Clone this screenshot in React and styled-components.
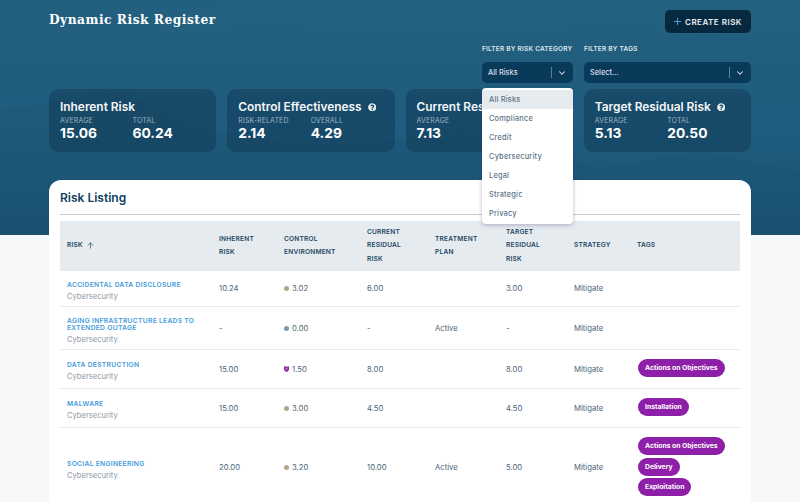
import React from "react";
import styled, { createGlobalStyle } from "styled-components";
import { ArrowUp, ChevronDown, Plus } from "lucide-react";
import { FaQuestionCircle } from "react-icons/fa";

const GlobalStyle = createGlobalStyle`
  html, body {
    margin: 0;
    height: 100%;
    overflow: hidden;
    background: #f5f7f8;
  }
  body {
    font-family: "Inter", "Open Sans", sans-serif;
  }
  * { box-sizing: border-box; }
`;

const Page = styled.div`
  position: relative;
  width: 800px;
  height: 502px;
  overflow: hidden;
`;

const Backdrop = styled.svg`
  position: absolute;
  top: 0;
  left: 0;
  width: 800px;
  height: 235px;
`;

const Content = styled.div`
  position: relative;
  padding: 10px 49px 0;
`;

const TopRow = styled.div`
  display: flex;
  justify-content: space-between;
  align-items: flex-start;
`;

const Title = styled.h1`
  margin: 0;
  font-family: "DejaVu Serif Condensed", "DejaVu Serif", "Liberation Serif", serif;
  font-stretch: condensed;
  font-size: 13.6px;
  line-height: 18px;
  font-weight: 700;
  letter-spacing: 0.5px;
  color: #fff;
`;

const CreateButton = styled.button`
  display: flex;
  align-items: center;
  justify-content: center;
  gap: 2px;
  width: 86px;
  height: 23px;
  padding: 0 2px 0 0;
  border: none;
  border-radius: 5px;
  background: #07293f;
  color: #e8eef2;
  font-family: inherit;
  font-size: 8px;
  font-weight: 600;
  letter-spacing: 0.5px;
`;

const Filters = styled.div`
  display: flex;
  justify-content: flex-end;
  gap: 11px;
  margin-top: 10px;
`;

const Filter = styled.div`
  position: relative;
  width: ${(p) => p.$width}px;
`;

const FilterLabel = styled.div`
  height: 19px;
  padding-top: 2px;
  font-size: 6.5px;
  line-height: 9px;
  font-weight: 600;
  letter-spacing: 0.22px;
  white-space: nowrap;
  color: #dfe7ec;
`;

const Select = styled.div`
  display: flex;
  align-items: center;
  height: 21px;
  padding: 0 6px 0 6px;
  border-radius: 5px;
  background: #0a3a5a;
  color: #d5dfe6;
  font-size: 7.4px;
  font-weight: 500;
`;

const SelectValue = styled.span`
  flex: 1;
`;

const SelectDivider = styled.span`
  width: 1px;
  height: 11px;
  margin-right: 5px;
  background: #5d7f94;
`;

const Menu = styled.ul`
  position: absolute;
  z-index: 5;
  top: 45px;
  left: 0;
  width: 91px;
  margin: 0;
  padding: 1.5px 0;
  list-style: none;
  border-radius: 4px;
  background: #fff;
  box-shadow: 0 1px 4px rgba(60, 50, 110, 0.35);
`;

const MenuItem = styled.li`
  height: 19px;
  padding-left: 7px;
  font-size: 7.4px;
  line-height: 19px;
  font-weight: 500;
  letter-spacing: 0.2px;
  color: #5b7488;
  background: ${(p) => (p.$active ? "#e6ebef" : "transparent")};
`;

const Stats = styled.div`
  display: grid;
  grid-template-columns: repeat(4, 1fr);
  gap: 11px;
  margin-top: 6px;
`;

const StatCard = styled.section`
  height: 63px;
  padding: 11px 11px 0;
  border-radius: 9px;
  background: rgba(12, 45, 68, 0.36);
  color: #fff;
`;

const StatTitle = styled.h2`
  display: flex;
  align-items: center;
  gap: 6px;
  margin: 0;
  font-size: 11.9px;
  line-height: 14px;
  font-weight: 600;
  white-space: nowrap;
  color: #f4f7f9;
`;

const StatColumns = styled.div`
  display: flex;
  margin-top: 3px;
`;

const StatColumn = styled.div`
  width: 72.5px;
`;

const StatLabel = styled.div`
  font-size: 6.9px;
  line-height: 8px;
  letter-spacing: 0.2px;
  color: #9db3c1;
`;

const StatValue = styled.div`
  font-size: 13.8px;
  line-height: 16px;
  font-weight: 700;
  color: #fff;
`;

const Panel = styled.section`
  margin-top: 28px;
  padding: 0 11px;
  min-height: 340px;
  border-radius: 12px 12px 0 0;
  background: #fff;
`;

const PanelTitle = styled.h2`
  margin: 0;
  height: 35px;
  padding-top: 10px;
  border-bottom: 1px solid #c3cdd6;
  font-size: 12px;
  line-height: 15px;
  font-weight: 600;
  color: #0f3f5f;
`;

const Table = styled.table`
  width: 680px;
  margin-top: 6px;
  table-layout: fixed;
  border-collapse: collapse;
`;

const HeadRow = styled.tr`
  height: 50px;
  background: #e6ebef;
`;

const HeadCell = styled.th`
  padding: 0 7px;
  text-align: left;
  font-size: 6.6px;
  line-height: 13.3px;
  font-weight: 600;
  letter-spacing: 0.2px;
  color: #24475f;
`;

const SortLabel = styled.span`
  display: inline-flex;
  align-items: center;
  gap: 3px;
`;

const Row = styled.tr`
  height: ${(p) => p.$height}px;
  border-bottom: 1px solid #e6eaee;
`;

const Cell = styled.td`
  padding: 1px 7px 0;
  font-size: 7.7px;
  font-weight: 400;
  color: #4b6478;
`;

const RiskCell = styled(Cell)`
  padding-top: 7px;
`;

const RiskName = styled.div`
  font-size: 6.7px;
  line-height: 7px;
  font-weight: 600;
  letter-spacing: 0.3px;
  color: #3f9bdc;
`;

const RiskCategory = styled.div`
  margin-top: 3px;
  font-size: 7.6px;
  line-height: 10px;
  color: #8d9aa6;
`;

const Score = styled.span`
  display: flex;
  align-items: center;
  gap: 3px;
`;

const Dot = styled.span`
  width: 5px;
  height: 5px;
  border-radius: 50%;
  background: ${(p) => p.$color};
`;

const TagList = styled.div`
  display: flex;
  flex-direction: column;
  align-items: flex-start;
  gap: 2.500px;
  margin: 0 0 2px 1px;
`;

const Tag = styled.span`
  height: 18px;
  padding: 0 7px;
  border-radius: 9px;
  background: #8e1fa8;
  color: #fff;
  font-size: 6.8px;
  line-height: 17px;
  font-weight: 700;
  white-space: nowrap;
`;

const categories = ["All Risks", "Compliance", "Credit", "Cybersecurity", "Legal", "Strategic", "Privacy"];

const stats = [
  { title: "Inherent Risk", items: [["AVERAGE", "15.06"], ["TOTAL", "60.24"]] },
  { title: "Control Effectiveness", help: true, items: [["RISK-RELATED", "2.14"], ["OVERALL", "4.29"]] },
  { title: "Current Residual Risk", items: [["AVERAGE", "7.13"]] },
  { title: "Target Residual Risk", help: true, items: [["AVERAGE", "5.13"], ["TOTAL", "20.50"]] },
];

const columns = [152, 65, 83, 68, 71, 68, 63, 110];

const risks = [
  { height: 35, name: "ACCIDENTAL DATA DISCLOSURE", inherent: "10.24", control: "3.02", dot: "#b5a58c", current: "6.00", plan: "", target: "3.00", tags: [] },
  { height: 43, name: "AGING INFRASTRUCTURE LEADS TO EXTENDED OUTAGE", inherent: "-", control: "0.00", dot: "#7f97ab", current: "-", plan: "Active", target: "-", tags: [] },
  { height: 39, name: "DATA DESTRUCTION", inherent: "15.00", control: "1.50", shield: true, current: "8.00", plan: "", target: "8.00", tags: ["Actions on Objectives"] },
  { height: 39, name: "MALWARE", inherent: "15.00", control: "3.00", dot: "#b5a58c", current: "4.50", plan: "", target: "4.50", tags: ["Installation"] },
  { height: 80, name: "SOCIAL ENGINEERING", inherent: "20.00", control: "3.20", dot: "#b5a58c", current: "10.00", plan: "Active", target: "5.00", tags: ["Actions on Objectives", "Delivery", "Exploitation"] },
];

const ShieldIcon = () => (
  <svg width="5" height="6" viewBox="0 0 10 12">
    <path d="M0 1h10v5c0 3-2.500 5-5 6-2.500-1-5-3-5-6z" fill="#8e1fa8" />
    <path d="M3 7l4-3" stroke="#fff" strokeWidth="1.6" />
  </svg>
);

export default function App() {
  return (
    <Page>
      <GlobalStyle />
      <Backdrop viewBox="0 0 800 235" preserveAspectRatio="none">
        <defs>
          <linearGradient id="sky" x1="0" y1="0" x2="0" y2="1">
            <stop offset="0" stopColor="#23607f" />
            <stop offset="0.55" stopColor="#1f5c7d" />
            <stop offset="1" stopColor="#1a5272" />
          </linearGradient>
        </defs>
        <rect width="800" height="235" fill="url(#sky)" />
        <path d="M0 32L100 30 160 26 230 0H800V32L700 42 620 22 480 48 380 40 280 28 160 36 60 44 0 40Z" fill="#2a6685" opacity="0.22" />
        <path d="M0 110L120 92 210 130 330 150 460 128 600 168 700 152 800 172V235H0Z" fill="#1a5070" opacity="0.18" />
      </Backdrop>
      <Content>
        <TopRow>
          <Title>Dynamic Risk Register</Title>
          <CreateButton>
            <Plus size={11} color="#4ba6e0" strokeWidth={2} />
            CREATE RISK
          </CreateButton>
        </TopRow>
        <Filters>
          <Filter $width={91}>
            <FilterLabel>FILTER BY RISK CATEGORY</FilterLabel>
            <Select>
              <SelectValue>All Risks</SelectValue>
              <SelectDivider />
              <ChevronDown size={10} color="#dfe7ec" strokeWidth={2.5} />
            </Select>
            <Menu>
              {categories.map((c, i) => (
                <MenuItem key={c} $active={i === 0}>{c}</MenuItem>
              ))}
            </Menu>
          </Filter>
          <Filter $width={167}>
            <FilterLabel>FILTER BY TAGS</FilterLabel>
            <Select>
              <SelectValue>Select...</SelectValue>
              <SelectDivider />
              <ChevronDown size={10} color="#dfe7ec" strokeWidth={2.5} />
            </Select>
          </Filter>
        </Filters>
        <Stats>
          {stats.map((s) => (
            <StatCard key={s.title}>
              <StatTitle>
                {s.title}
                {s.help && <FaQuestionCircle size={8.500} color="#e8edf0" />}
              </StatTitle>
              <StatColumns>
                {s.items.map(([label, value]) => (
                  <StatColumn key={label}>
                    <StatLabel>{label}</StatLabel>
                    <StatValue>{value}</StatValue>
                  </StatColumn>
                ))}
              </StatColumns>
            </StatCard>
          ))}
        </Stats>
        <Panel>
          <PanelTitle>Risk Listing</PanelTitle>
          <Table>
            <colgroup>
              {columns.map((w, i) => (
                <col key={i} width={w} />
              ))}
            </colgroup>
            <thead>
              <HeadRow>
                <HeadCell>
                  <SortLabel>RISK <ArrowUp size={9} strokeWidth={1.8} /></SortLabel>
                </HeadCell>
                <HeadCell>INHERENT<br />RISK</HeadCell>
                <HeadCell>CONTROL<br />ENVIRONMENT</HeadCell>
                <HeadCell>CURRENT<br />RESIDUAL<br />RISK</HeadCell>
                <HeadCell>TREATMENT<br />PLAN</HeadCell>
                <HeadCell>TARGET<br />RESIDUAL<br />RISK</HeadCell>
                <HeadCell>STRATEGY</HeadCell>
                <HeadCell>TAGS</HeadCell>
              </HeadRow>
            </thead>
            <tbody>
              {risks.map((r) => (
                <Row key={r.name} $height={r.height}>
                  <RiskCell>
                    <RiskName>{r.name}</RiskName>
                    <RiskCategory>Cybersecurity</RiskCategory>
                  </RiskCell>
                  <Cell>{r.inherent}</Cell>
                  <Cell>
                    <Score>
                      {r.shield ? <ShieldIcon /> : <Dot $color={r.dot} />}
                      {r.control}
                    </Score>
                  </Cell>
                  <Cell>{r.current}</Cell>
                  <Cell>{r.plan}</Cell>
                  <Cell>{r.target}</Cell>
                  <Cell>Mitigate</Cell>
                  <Cell>
                    <TagList>
                      {r.tags.map((t) => (
                        <Tag key={t}>{t}</Tag>
                      ))}
                    </TagList>
                  </Cell>
                </Row>
              ))}
            </tbody>
          </Table>
        </Panel>
      </Content>
    </Page>
  );
}
